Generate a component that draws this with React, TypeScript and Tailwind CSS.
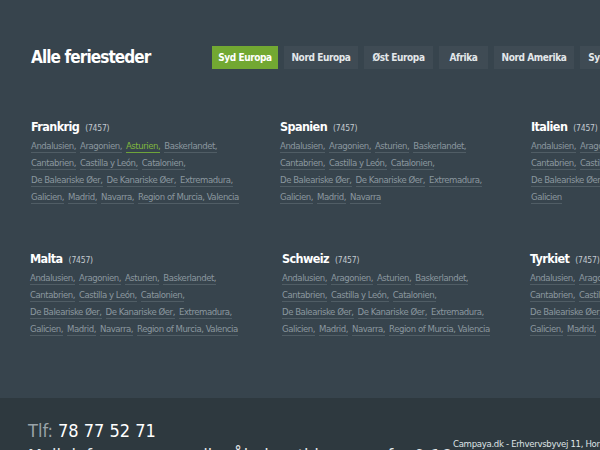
const regions = [
	{ name: "Syd Europa", w: "w-[66px]" },
	{ name: "Nord Europa", w: "w-[74px]" },
	{ name: "Øst Europa", w: "w-[69px]" },
	{ name: "Afrika", w: "w-[49px]" },
	{ name: "Nord Amerika", w: "w-[80px]" },
	{ name: "Syd Amerika", w: "w-[76px]" },
];

const fullList = [
	["Andalusien,", "Aragonien,", "Asturien,", "Baskerlandet,"],
	["Cantabrien,", "Castilla y León,", "Catalonien,"],
	["De Baleariske Øer,", "De Kanariske Øer,", "Extremadura,"],
	["Galicien,", "Madrid,", "Navarra,", "Region of Murcia, Valencia"],
];

const shortList = [
	["Andalusien,", "Aragonien,", "Asturien,", "Baskerlandet,"],
	["Cantabrien,", "Castilla y León,", "Catalonien,"],
	["De Baleariske Øer,", "De Kanariske Øer,", "Extremadura,"],
	["Galicien,", "Madrid,", "Navarra"],
];

const rows = [
	{
		cols: "mt-[49px] grid-cols-[249px_251px_1fr] pl-[31px]",
		items: [
			{ name: "Frankrig", lines: fullList, active: "Asturien," },
			{ name: "Spanien", lines: shortList },
			{ name: "Italien", lines: [...fullList.slice(0, 3), ["Galicien"]] },
		],
	},
	{
		cols: "mt-[43px] grid-cols-[252px_248px_1fr] pl-[30px]",
		items: [
			{ name: "Malta", lines: fullList },
			{ name: "Schweiz", lines: fullList },
			{ name: "Tyrkiet", lines: fullList },
		],
	},
];

const font = {
	fontFamily: '"DejaVu Sans Condensed", "Roboto", sans-serif',
};

type Dest = { name: string; lines: string[][]; active?: string };

const Country = ({ dest }: { dest: Dest }) => {
	return (
		<div className="whitespace-nowrap">
			<div className="flex h-[20px] items-baseline gap-[6px]">
				<span className="text-[12.5px] font-bold tracking-[-0.6px] text-white">
					{dest.name}
				</span>
				<span className="text-[8.5px] tracking-[-0.2px] text-[#c3cad0]">(7457)</span>
			</div>
			<div className="mt-[1px] flex flex-col">
				{dest.lines.map((line, i) => (
					<div
						key={i}
						className="flex h-[17px] items-start gap-[4px] text-[9.5px] tracking-[-0.45px]"
					>
						{line.map((link) => {
							const on = link === dest.active;
							return (
								<a
									key={link}
									href="#"
									className={
										on
											? "border-b border-[#6ea43a] leading-[13px] text-[#7fb63f]"
											: "border-b border-[#505d65] leading-[13px] text-[#8b979f]"
									}
								>
									{link}
								</a>
							);
						})}
					</div>
				))}
			</div>
		</div>
	);
};

const App = () => {
	return (
		<div
			className="flex h-[450px] w-[600px] flex-col overflow-hidden bg-[#37444d]"
			style={font}
		>
			<div className="flex h-[398px] shrink-0 flex-col">
				<div className="mt-[46px] flex h-[23px] items-center whitespace-nowrap pl-[31px]">
					<h1 className="w-[181px] shrink-0 text-[17px] font-bold tracking-[-0.9px] text-white">
						Alle feriesteder
					</h1>
					<nav className="flex gap-[6px]">
						{regions.map((r, i) => (
							<button
								key={r.name}
								className={`${r.w} h-[23px] shrink-0 text-[10px] font-bold tracking-[-0.4px] ${
									i === 0
										? "bg-[#72a832] text-white"
										: "bg-[#3f4b54] text-[#e3e7ea]"
								}`}
							>
								{r.name}
							</button>
						))}
					</nav>
				</div>
				{rows.map((row, i) => (
					<div key={i} className={`grid ${row.cols}`}>
						{row.items.map((d) => (
							<Country key={d.name} dest={d} />
						))}
					</div>
				))}
			</div>
			<footer className="flex-1 overflow-hidden bg-[#2e393f] pl-[28px] pt-[22px] text-white">
				<div className="flex h-[22px] items-start whitespace-nowrap">
					<div className="w-[425px] shrink-0 text-[18px] leading-[22px]">
						<span className="text-[#9aa3a9]">Tlf: </span>
						<span>78 77 52 71</span>
					</div>
					<div className="mt-[17px] text-[9.5px] tracking-[-0.3px] text-[#dfe3e6]">
						Campaya.dk - Erhvervsbyvej 11, Horsens
					</div>
				</div>
				<div className="mt-[3px] whitespace-nowrap text-[18px] leading-[22px] text-[#e3e7ea]">
					Mail: info@campaya.dk · Åbningstider: man-fre 9-16
				</div>
			</footer>
		</div>
	);
};

export default App;
